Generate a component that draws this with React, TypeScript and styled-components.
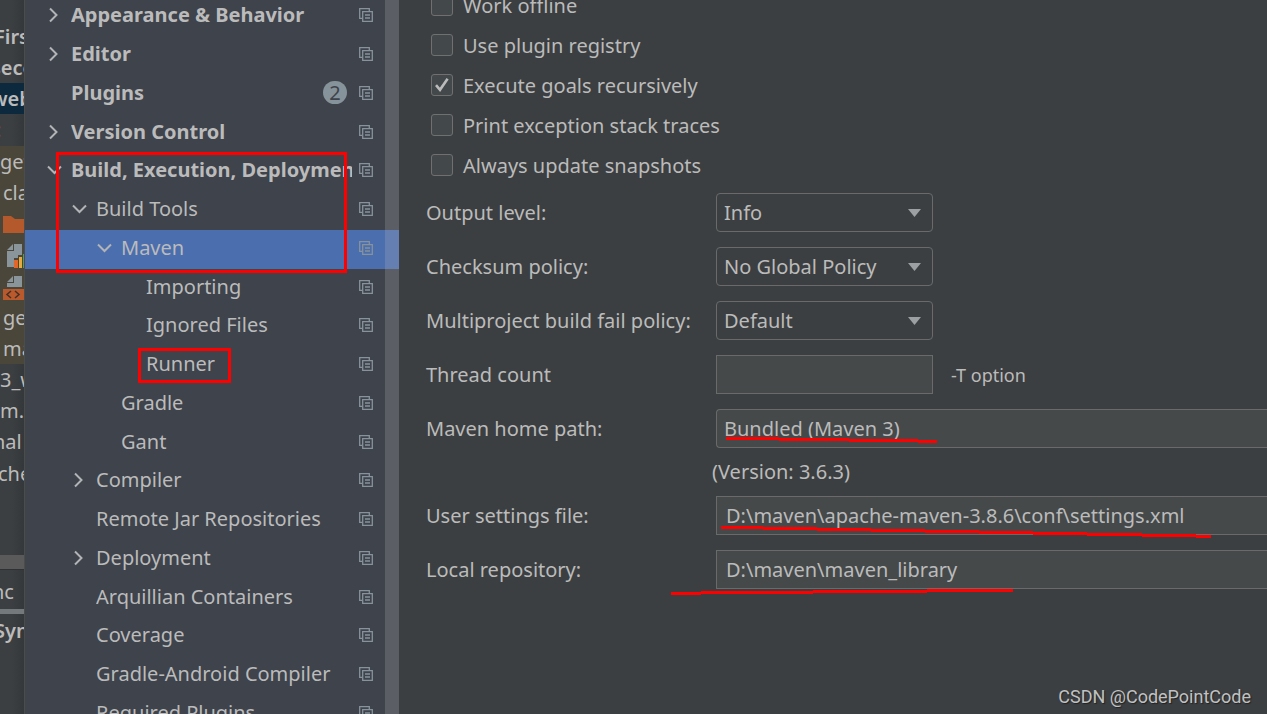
import React from "react";
import styled, { createGlobalStyle } from "styled-components";

const Global = createGlobalStyle`
  * { box-sizing: border-box; }
  body {
    margin: 0;
    overflow: hidden;
    background: #3c3f41;
    color: #bbbbbb;
    font: 20px/28px "Noto Sans", "Open Sans", sans-serif;
  }
`;

const Page = styled.div`
  position: relative;
  display: flex;
  height: 100vh;
  overflow: hidden;
`;

/* ---------- project window behind the dialog ---------- */

const Project = styled.aside`
  flex: 0 0 25px;
  overflow: hidden;
  border-right: 1px solid #4b4c4c;
  background: linear-gradient(90deg, #3c3f41 50%, #35383a);
`;

const ProjectList = styled.ul`
  margin: -10px 0 0;
  padding: 0;
  list-style: none;
`;

const ProjectItem = styled.li<{ $tone?: "selected" | "excluded"; $bold?: boolean; $shift?: number }>`
  display: flex;
  align-items: center;
  height: 31px;
  white-space: nowrap;
  font-weight: ${(p) => (p.$bold ? 600 : 400)};
  text-indent: ${(p) => p.$shift ?? 0}px;
  background: ${(p) =>
    p.$tone === "selected" ? "#0d293e" : p.$tone === "excluded" ? "#4b463a" : "transparent"};

  &:nth-child(5n) {
    height: 32px;
  }
`;

const Orange = styled.span`
  color: #c4683c;
`;

const ProjectScroll = styled.div`
  height: 15px;
  margin-top: 66px;
  background: #5a5a5a;
  border-bottom: 1px solid #2f3132;
`;

const ToolTab = styled.div`
  height: 44px;
  padding-top: 8px;
  border-bottom: 5px solid #74797c;
  text-indent: -8px;
`;

const ToolTitle = styled.div`
  padding-top: 3px;
  font-weight: 600;
  text-indent: -6px;
`;

/* ---------- settings tree ---------- */

const Sidebar = styled.nav`
  flex: 0 0 374px;
  overflow: hidden;
  background: linear-gradient(90deg, #3e434c 360px, #5c5e66 360px);
`;

const Tree = styled.ul`
  margin: -2px 0 0;
  padding: 0;
  list-style: none;
`;

const TreeRow = styled.li<{ $level: number; $selected?: boolean }>`
  display: flex;
  align-items: center;
  height: 39px;
  padding: 0 26px 4px ${(p) => 21 + p.$level * 25}px;
  background: ${(p) =>
    p.$selected ? "linear-gradient(90deg, #4b6eaf 360px, #657fb2 360px)" : "transparent"};

  &:nth-child(4n + 1) {
    height: 38px;
  }
`;

const Twisty = styled.span`
  display: flex;
  flex: 0 0 25px;
`;

const TreeLabel = styled.span<{ $bold?: boolean }>`
  flex: 1 1 0;
  overflow: hidden;
  white-space: nowrap;
  font-weight: ${(p) => (p.$bold ? 700 : 400)};
`;

const Badge = styled.span`
  width: 24px;
  height: 23px;
  margin-right: 5px;
  border-radius: 12px;
  background: #87939a;
  color: #3e434c;
  line-height: 23px;
  text-align: center;
`;

const CopySlot = styled.span`
  display: flex;
  flex: 0 0 21px;
  padding-left: 7px;
`;

/* ---------- settings form ---------- */

const Main = styled.main`
  flex: 1 1 0;
  min-width: 0;
  padding-left: 27px;
  overflow: hidden;
`;

const Checks = styled.div`
  margin-top: -14px;
`;

const CheckRow = styled.label`
  display: flex;
  align-items: center;
  gap: 10px;
  height: 40px;
  padding-left: 5px;
`;

const CheckBox = styled.input`
  appearance: none;
  width: 22px;
  height: 22px;
  margin: 0 0 2px;
  border: 1px solid #707070;
  border-radius: 3px;
  background: #43494a;

  &:checked {
    background: #43494a
      url("data:image/svg+xml,%3Csvg xmlns='http://www.w3.org/2000/svg' viewBox='0 0 20 20' fill='none' stroke='%23bbbbbb' stroke-width='2.6'%3E%3Cpath d='M4 10.2L8 14.8L15.6 3.8'/%3E%3C/svg%3E");
  }
`;

const Form = styled.div`
  display: grid;
  grid-template-columns: 290px 1fr;
  row-gap: 15px;
  margin-top: 7px;
`;

const FieldLabel = styled.label`
  align-self: center;
  white-space: nowrap;
`;

const FieldCell = styled.div`
  display: flex;
  align-items: center;
  height: 39px;
`;

const SelectWrap = styled.span<{ $wide?: boolean }>`
  position: relative;
  display: flex;
  flex: ${(p) => (p.$wide ? "1 1 0" : "0 0 217px")};

  svg {
    position: absolute;
    top: 16px;
    right: 12px;
    pointer-events: none;
  }
`;

const Select = styled.select<{ $filled?: boolean }>`
  appearance: none;
  width: 100%;
  height: 39px;
  padding: 0 7px;
  border: 1px solid #6a6a6a;
  border-right-width: ${(p) => (p.$filled ? 0 : 1)}px;
  border-radius: ${(p) => (p.$filled ? "4px 0 0 4px" : "4px")};
  background: ${(p) => (p.$filled ? "#45494a" : "#3c3f41")};
  color: inherit;
  font: inherit;
`;

const TextBox = styled.input<{ $wide?: boolean }>`
  flex: ${(p) => (p.$wide ? "1 1 0" : "0 0 217px")};
  min-width: 0;
  height: 39px;
  padding: 0 9px;
  border: 1px solid #6a6a6a;
  border-right-width: ${(p) => (p.$wide ? 0 : 1)}px;
  border-radius: 0;
  background: #45494a;
  color: inherit;
  font: inherit;
`;

const Hint = styled.span`
  margin-left: 18px;
  font-size: 18px;
`;

const Version = styled.div`
  grid-column: 2;
  height: 18px;
  margin-left: -4px;
  line-height: 18px;
`;

const Marks = styled.svg`
  position: absolute;
  top: 0;
  left: 0;
  pointer-events: none;
`;

const Watermark = styled.div`
  position: absolute;
  right: 16px;
  bottom: 4px;
  color: #c0c1c2;
  font: 18px/26px Roboto, "Liberation Sans", sans-serif;
  text-shadow: 1px 1px 1px #222222;
`;

/* ---------- drawings ---------- */

const Chevron = ({ open }: { open: boolean }) => (
  <svg width="16" height="16" fill="none" stroke="#b2b4b6" strokeWidth="2">
    <path d={open ? "M2 4.5L8.5 11L15 4.5" : "M4 1.5L10.5 8L4 14.5"} />
  </svg>
);

const CopyIcon = () => (
  <svg width="14" height="14" fill="none" stroke="#87929a" strokeWidth="1.300">
    <path d="M3 10.3H.7V.7H10.3V3M3.7 3.7H13.3V13.3H3.7ZM6 7H11M6 10H11" />
  </svg>
);

const Arrow = () => (
  <svg width="13" height="8" fill="#9da0a3">
    <path d="M0 0H13L6.500 8Z" />
  </svg>
);

const FolderIcon = () => (
  <svg width="24" height="31">
    <path d="M3 8H11L15 11H24V25H3Z" fill="#b3592b" />
  </svg>
);

const ChartFileIcon = () => (
  <svg width="24" height="31">
    <path d="M7 11L13 5V11ZM14 5H22V16H18V19H14V28H7V12H14Z" fill="#8a949b" />
    <path d="M14 21H18V29H14Z" fill="#e0662c" />
    <path d="M19 18H22V29H19Z" fill="#e9a93c" />
    <path d="M23 15H24V29H23Z" fill="#5c9a4e" />
  </svg>
);

const MarkupFileIcon = () => (
  <svg width="24" height="31">
    <path d="M7 11L13 5V11ZM14 5H22V16H7V12H14Z" fill="#8a949b" />
    <path d="M3 18H24V29H3Z" fill="#b9592c" />
    <path d="M11 20L7 23.500L11 27M15 20L19 23.500L15 27" fill="none" stroke="#40302a" strokeWidth="1.500" />
  </svg>
);

/* ---------- data ---------- */

type Node = { label: string; level: number; open?: boolean; bold?: boolean; badge?: number; selected?: boolean };

const tree: Node[] = [
  { label: "Appearance & Behavior", level: 0, open: false, bold: true },
  { label: "Editor", level: 0, open: false, bold: true },
  { label: "Plugins", level: 0, bold: true, badge: 2 },
  { label: "Version Control", level: 0, open: false, bold: true },
  { label: "Build, Execution, Deployment", level: 0, open: true, bold: true },
  { label: "Build Tools", level: 1, open: true },
  { label: "Maven", level: 2, open: true, selected: true },
  { label: "Importing", level: 3 },
  { label: "Ignored Files", level: 3 },
  { label: "Runner", level: 3 },
  { label: "Gradle", level: 2 },
  { label: "Gant", level: 2 },
  { label: "Compiler", level: 1, open: false },
  { label: "Remote Jar Repositories", level: 1 },
  { label: "Deployment", level: 1, open: false },
  { label: "Arquillian Containers", level: 1 },
  { label: "Coverage", level: 1 },
  { label: "Gradle-Android Compiler", level: 1 },
  { label: "Required Plugins", level: 1 },
];

const checks = [
  { label: "Work offline", on: false },
  { label: "Use plugin registry", on: false },
  { label: "Execute goals recursively", on: true },
  { label: "Print exception stack traces", on: false },
  { label: "Always update snapshots", on: false },
];

const policies = [
  { id: "output", label: "Output level:", value: "Info" },
  { id: "checksum", label: "Checksum policy:", value: "No Global Policy" },
  { id: "multiproject", label: "Multiproject build fail policy:", value: "Default" },
];

export default function App() {
  return (
    <>
      <Global />
      <Page>
        <Project>
          <ProjectList>
            <ProjectItem />
            <ProjectItem $bold $shift={-6}>First</ProjectItem>
            <ProjectItem $bold $shift={-9}>second</ProjectItem>
            <ProjectItem $bold $shift={-9} $tone="selected">web</ProjectItem>
            <ProjectItem $shift={-4}><Orange>:</Orange></ProjectItem>
            <ProjectItem $tone="excluded">get</ProjectItem>
            <ProjectItem $tone="excluded" $shift={3}>classes</ProjectItem>
            <ProjectItem $tone="excluded"><FolderIcon /></ProjectItem>
            <ProjectItem $tone="excluded"><ChartFileIcon /></ProjectItem>
            <ProjectItem $tone="excluded"><MarkupFileIcon /></ProjectItem>
            <ProjectItem $tone="excluded" $shift={3}>generated</ProjectItem>
            <ProjectItem $tone="excluded" $shift={3}>maven</ProjectItem>
            <ProjectItem>3_web</ProjectItem>
            <ProjectItem>m.xml</ProjectItem>
            <ProjectItem $shift={-7}>nal</ProjectItem>
            <ProjectItem $shift={-2}>ches</ProjectItem>
          </ProjectList>
          <ProjectScroll />
          <ToolTab>nc</ToolTab>
          <ToolTitle>Sync</ToolTitle>
        </Project>

        <Sidebar>
          <Tree>
            {tree.map((n) => (
              <TreeRow key={n.label} $level={n.level} $selected={n.selected}>
                <Twisty>{n.open !== undefined && <Chevron open={n.open} />}</Twisty>
                <TreeLabel $bold={n.bold}>{n.label}</TreeLabel>
                {n.badge && <Badge>{n.badge}</Badge>}
                <CopySlot><CopyIcon /></CopySlot>
              </TreeRow>
            ))}
          </Tree>
        </Sidebar>

        <Main>
          <Checks>
            {checks.map((c) => (
              <CheckRow key={c.label}>
                <CheckBox type="checkbox" defaultChecked={c.on} />
                {c.label}
              </CheckRow>
            ))}
          </Checks>
          <Form>
            {policies.map((p) => (
              <React.Fragment key={p.id}>
                <FieldLabel htmlFor={p.id}>{p.label}</FieldLabel>
                <FieldCell>
                  <SelectWrap>
                    <Select id={p.id}><option>{p.value}</option></Select>
                    <Arrow />
                  </SelectWrap>
                </FieldCell>
              </React.Fragment>
            ))}
            <FieldLabel htmlFor="threads">Thread count</FieldLabel>
            <FieldCell>
              <TextBox id="threads" type="text" />
              <Hint>-T option</Hint>
            </FieldCell>
            <FieldLabel htmlFor="home">Maven home path:</FieldLabel>
            <FieldCell>
              <SelectWrap $wide>
                <Select id="home" $filled><option>Bundled (Maven 3)</option></Select>
              </SelectWrap>
            </FieldCell>
            <Version>(Version: 3.6.3)</Version>
            <FieldLabel htmlFor="settings">User settings file:</FieldLabel>
            <FieldCell>
              <TextBox id="settings" $wide type="text" defaultValue={"D:\\maven\\apache-maven-3.8.6\\conf\\settings.xml"} />
            </FieldCell>
            <FieldLabel htmlFor="repository">Local repository:</FieldLabel>
            <FieldCell>
              <TextBox id="repository" $wide type="text" defaultValue={"D:\\maven\\maven_library"} />
            </FieldCell>
          </Form>
        </Main>

        <Marks width="1267" height="714" fill="none" stroke="#ff0000" strokeWidth="3" shapeRendering="crispEdges">
          <path d="M57.500 153.500H345.500V271.500H57.500Z" />
          <path d="M139.500 349.500H229.500V381.500H139.500Z" />
          <path d="M726 438.500H779M779 439.500H849M849 440.500H918M918 441.500H937" />
          <path d="M721 527.500H763M763 528.500H817M817 529.500H871M871 530.500H925M925 531.500H979M979 532.500H1033M1033 533.500H1087M1087 534.500H1142M1142 535.500H1196M1196 536.500H1211" />
          <path d="M671 593.500H701M701 592.500H813M813 591.500H927M927 590.500H1013" />
        </Marks>
        <Watermark>CSDN @CodePointCode</Watermark>
      </Page>
    </>
  );
}
